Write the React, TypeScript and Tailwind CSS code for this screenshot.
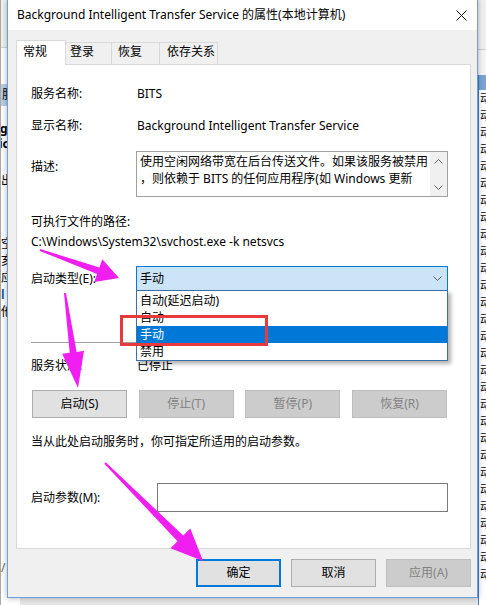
import React from 'react'

type P = [number, number]

// tapered annotation arrow, tail -> tip
function arrowPoints(tail: P, tip: P, headLen: number, headW: number, tailW: number, neckW: number) {
  const dx = tip[0] - tail[0]
  const dy = tip[1] - tail[1]
  const len = Math.hypot(dx, dy)
  const ux = dx / len
  const uy = dy / len
  const nx = -uy
  const ny = ux
  const bx = tip[0] - ux * headLen
  const by = tip[1] - uy * headLen
  const pts: P[] = [
    [tail[0] + (nx * tailW) / 2, tail[1] + (ny * tailW) / 2],
    [bx + (nx * neckW) / 2, by + (ny * neckW) / 2],
    [bx + (nx * headW) / 2, by + (ny * headW) / 2],
    tip,
    [bx - (nx * headW) / 2, by - (ny * headW) / 2],
    [bx - (nx * neckW) / 2, by - (ny * neckW) / 2],
    [tail[0] - (nx * tailW) / 2, tail[1] - (ny * tailW) / 2],
  ]
  return pts.map((p) => `${p[0].toFixed(1)},${p[1].toFixed(1)}`).join(' ')
}

function Backdrop() {
  const rows = Array.from({ length: 29 })
  return (
    <div className="absolute inset-0 flex">
      <div className="w-[20px] h-full border-l border-[#a9a9a9] bg-white flex flex-col overflow-hidden">
        <div className="h-[48px] shrink-0 bg-[#f0f0f0] border-b border-[#d4d4d4]" />
        <div className="h-[36px] shrink-0" />
        <div className="h-[22px] shrink-0 bg-[#b9cde3] pl-[1px] leading-[22px]">服</div>
        <div className="mt-[15px] h-[15px] leading-[15px] font-bold -ml-[1px]">g</div>
        <div className="h-[15px] leading-[15px] font-bold -ml-[2px]">ic</div>
        <div className="mt-[22px] h-[16px] leading-[16px]">出</div>
        <div className="mt-[46px] h-[17px] leading-[17px]">空</div>
        <div className="h-[17px] leading-[17px]">亥</div>
        <div className="h-[17px] leading-[17px]">应</div>
        <div className="h-[17px] leading-[17px] text-[#1a56b0] font-bold">l</div>
        <div className="h-[17px] leading-[17px]">他</div>
        <div className="mt-[240px] h-[16px] leading-[16px] text-[#666]">/</div>
      </div>
      <div className="flex-1" />
      <div className="w-[8px] h-full flex flex-col overflow-hidden bg-white">
        <div className="h-[50px] shrink-0 bg-[#f0f0f0] border-b border-[#cfcfcf]" />
        <div className="h-[25px] shrink-0 bg-[#f5f5f5]" />
        <div className="flex-1 border-l border-[#3d7fd1] flex flex-col">
          <div className="h-[15px] shrink-0 bg-[#7aa5d6]" />
          {rows.map((_, i) => (
            <div key={i} className="h-[17px] shrink-0 leading-[17px] pl-[1px]">动</div>
          ))}
        </div>
      </div>
    </div>
  )
}

function Tabs() {
  return (
    <div className="relative z-10 flex items-end h-[25px] -mb-[1px]">
      <div className="w-[50px] h-[25px] bg-white border border-b-0 border-[#d9d9d9] pl-[6px] pt-[3px]">常规</div>
      <div className="w-[46px] h-[22px] mb-[1px] border border-l-0 border-b-0 border-[#d9d9d9] pl-[4px] pt-[1px]">登录</div>
      <div className="w-[48px] h-[22px] mb-[1px] border border-l-0 border-b-0 border-[#d9d9d9] pl-[6px] pt-[1px]">恢复</div>
      <div className="w-[58px] h-[22px] mb-[1px] border border-l-0 border-b-0 border-[#d9d9d9] pl-[7px] pt-[1px]">依存关系</div>
    </div>
  )
}

function Chevron({ up = false }: { up?: boolean }) {
  return (
    <svg width="9" height="5" viewBox="0 0 9 5" className="shrink-0">
      <path d={up ? 'M0.5 4.5 L4.5 0.5 L8.5 4.5' : 'M0.5 0.5 L4.5 4.5 L8.5 0.5'} fill="none" stroke="#606060" strokeWidth="1" />
    </svg>
  )
}

function Btn({ children, disabled = false, w }: { children: React.ReactNode; disabled?: boolean; w: string }) {
  return (
    <div
      className={
        disabled
          ? `${w} h-[28px] flex items-center justify-center border border-[#bfbfbf] bg-[#cccccc] text-[#838383]`
          : `${w} h-[28px] flex items-center justify-center border border-[#adadad] bg-[#e1e1e1]`
      }
    >
      {children}
    </div>
  )
}

function Panel() {
  return (
    <div className="w-[455px] h-[485px] shrink-0 border border-[#d9d9d9] bg-white flex flex-col pl-[14px] pt-[21px]">
      <div className="flex h-[16px]">
        <div className="w-[106px]">服务名称:</div>
        <div>BITS</div>
      </div>
      <div className="flex h-[16px] mt-[16px]">
        <div className="w-[106px]">显示名称:</div>
        <div>Background Intelligent Transfer Service</div>
      </div>
      <div className="flex mt-[17px]">
        <div className="w-[105px] mt-[8px]">描述:</div>
        <div className="w-[312px] h-[46px] border border-[#a0a0a0] flex">
          <div className="flex-1 pl-[3px] pt-[1px] leading-[17px]">
            使用空闲网络带宽在后台传送文件。如果该服务被禁用
            <br />
            ，则依赖于 BITS 的任何应用程序(如 Windows 更新
          </div>
          <div className="w-[17px] bg-[#f0f0f0] flex flex-col items-center justify-between pt-[7px] pb-[6px]">
            <Chevron up />
            <Chevron />
          </div>
        </div>
      </div>
      <div className="mt-[17px] h-[16px]">可执行文件的路径:</div>
      <div className="mt-[4px] h-[16px]">C:\Windows\System32\svchost.exe -k netsvcs</div>
      <div className="flex items-center mt-[16px]">
        <div className="w-[105px] pt-[1px]">启动类型(E):</div>
        <div className="relative w-[312px] h-[25px] border border-[#0078d7] bg-[#cce4f7] flex items-center pl-[3px] pr-[5px]">
          <div className="flex-1">手动</div>
          <Chevron />
          <div className="absolute left-[-1px] top-full w-[312px] border border-[#3a6fa8] bg-white pt-[1px] shadow-[3px_3px_4px_rgba(0,0,0,0.3)]">
            <div className="h-[17px] leading-[17px] pl-[3px]">自动(延迟启动)</div>
            <div className="h-[17px] leading-[17px] pl-[3px]">自动</div>
            <div className="h-[17px] leading-[17px] pl-[3px] bg-[#0078d7] text-white">手动</div>
            <div className="h-[17px] leading-[17px] pl-[3px]">禁用</div>
          </div>
        </div>
      </div>
      <div className="mt-[51px] h-[1px] w-[416px] bg-[#a0a0a0]" />
      <div className="flex h-[16px] mt-[15px]">
        <div className="w-[106px]">服务状态:</div>
        <div>已停止</div>
      </div>
      <div className="mt-[16px] ml-[1px] w-[415px] flex justify-between">
        <Btn w="w-[95px]">启动(S)</Btn>
        <Btn w="w-[95px]" disabled>停止(T)</Btn>
        <Btn w="w-[95px]" disabled>暂停(P)</Btn>
        <Btn w="w-[95px]" disabled>恢复(R)</Btn>
      </div>
      <div className="mt-[16px] h-[16px]">当从此处启动服务时，你可指定所适用的启动参数。</div>
      <div className="flex items-center mt-[33px]">
        <div className="w-[126px]">启动参数(M):</div>
        <div className="w-[291px] h-[29px] border border-[#7a7a7a] bg-white" />
      </div>
    </div>
  )
}

function Dialog() {
  return (
    <div className="absolute left-[7px] top-[-1px] w-[471px] h-[599px] flex flex-col border border-[#6f9fd6] bg-[#f0f0f0] shadow-[0_0_6px_rgba(0,0,0,0.3)]">
      <div className="h-[30px] shrink-0 bg-white flex items-center pl-[9px] pr-[10px]">
        <div className="flex-1">Background Intelligent Transfer Service 的属性(本地计算机)</div>
        <svg width="11" height="11" viewBox="0 0 11 11">
          <path d="M0.5 0.5 L10.5 10.5 M10.5 0.5 L0.5 10.5" stroke="#111" strokeWidth="1" fill="none" />
        </svg>
      </div>
      <div className="flex-1 flex flex-col pt-[10px] pl-[8px]">
        <Tabs />
        <Panel />
        <div className="flex gap-[10px] mt-[10px] ml-[180px]">
          <div className="w-[85px] h-[28px] flex items-center justify-center border-2 border-[#0078d7] bg-[#e1e1e1]">确定</div>
          <Btn w="w-[85px]">取消</Btn>
          <Btn w="w-[85px]" disabled>应用(A)</Btn>
        </div>
      </div>
    </div>
  )
}

function Marks() {
  const pink = '#f01ef0'
  return (
    <svg className="absolute inset-0 pointer-events-none" width="486" height="605" viewBox="0 0 486 605">
      <rect x="121.5" y="316.5" width="145" height="28" fill="none" stroke="#e63a3d" strokeWidth="3" />
      <polygon points={arrowPoints([40, 250], [119, 278], 22, 24, 2, 7)} fill={pink} />
      <polygon points={arrowPoints([65, 293], [78, 388], 36, 22, 2, 7)} fill={pink} />
      <polygon points={arrowPoints([105, 463], [203, 561], 32, 28, 2, 8)} fill={pink} />
    </svg>
  )
}

export default function App() {
  return (
    <div className="relative w-[486px] h-[605px] overflow-hidden bg-[#e6e6e6] text-[12px] leading-[16px] text-black font-['Noto_Sans','Noto_Sans_CJK_SC',sans-serif]">
      <Backdrop />
      <Dialog />
      <Marks />
    </div>
  )
}
